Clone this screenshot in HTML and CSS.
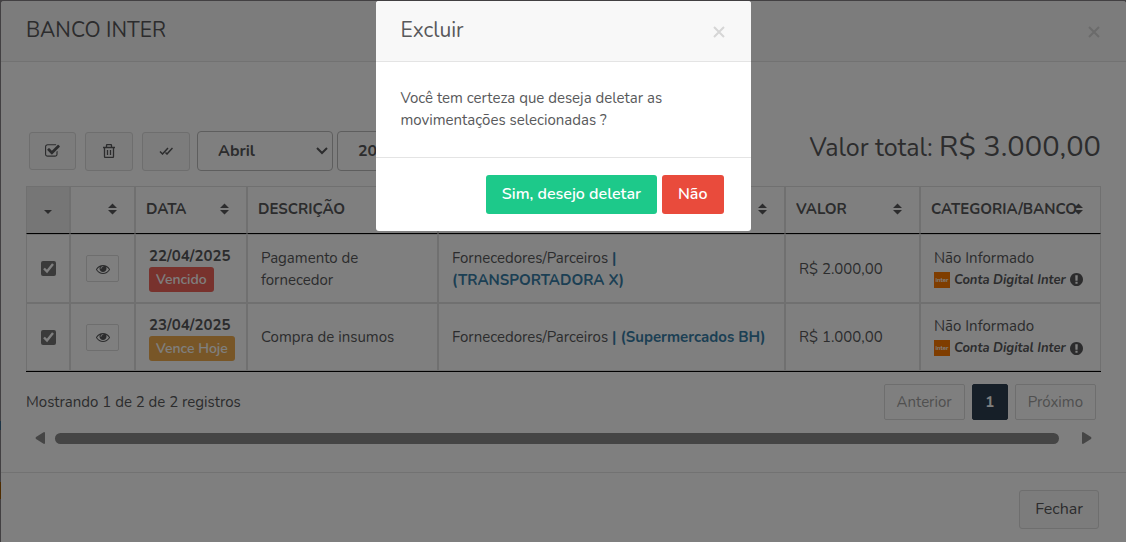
FILE: index.html
```html
<!DOCTYPE html>
<html lang="pt-BR">
<head>
    <meta charset="UTF-8">
    <meta name="viewport" content="width=device-width, initial-scale=1.0">
    <title>Banco Inter</title>
    <link rel="stylesheet" href="styles.css">
</head>
<body>
    <!-- Shared icons -->
    <svg class="sprite" aria-hidden="true">
        <symbol id="icon-check" viewBox="0 0 1792 1792"><path d="M1408 930v318q0 119-84.5 203.5t-203.5 84.5h-832q-119 0-203.5-84.5t-84.5-203.5v-832q0-119 84.5-203.5t203.5-84.5h832q63 0 117 25 15 7 18 23 3 17-9 29l-49 49q-10 10-23 10-3 0-9-2-23-6-45-6h-832q-66 0-113 47t-47 113v832q0 66 47 113t113 47h832q66 0 113-47t47-113v-254q0-13 9-22l64-64q10-10 23-10 6 0 12 3 20 8 20 29zm231-489l-814 814q-24 24-57 24t-57-24l-430-430q-24-24-24-57t24-57l110-110q24-24 57-24t57 24l263 263 647-647q24-24 57-24t57 24l110 110q24 24 24 57t-24 57z"/></symbol>
        <symbol id="icon-trash" viewBox="0 0 14 14"><path fill="none" stroke="currentColor" stroke-width="1.3" d="M1 3.5h12M4.5 3.5v-2q0-1 1-1h3q1 0 1 1v2M2.5 3.5v9q0 1 1 1h7q1 0 1-1v-9M5.5 6v5M8.5 6v5"/></symbol>
        <symbol id="icon-checks" viewBox="0 0 14 8"><path fill="none" stroke="currentColor" stroke-width="1.5" d="M1 4.5l2.500 2.500L9 1M6.500 5.500L8 7l5.500-6"/></symbol>
        <symbol id="icon-eye" viewBox="0 0 1792 1792"><path d="M1664 960q-152-236-381-353 61 104 61 225 0 185-131.500 316.500t-316.500 131.500-316.500-131.500-131.500-316.500q0-121 61-225-229 117-381 353 133 205 333.500 326.500t434.500 121.500 434.500-121.500 333.500-326.500zm-720-384q0-20-14-34t-34-14q-125 0-214.500 89.500t-89.500 214.500q0 20 14 34t34 14 34-14 14-34q0-86 61-147t147-61q20 0 34-14t14-34zm848 384q0 34-20 69-140 230-376.500 368.500t-499.500 138.500-499.500-139-376.500-368q-20-35-20-69t20-69q140-229 376.500-368t499.500-139 499.500 139 376.500 368q20 35 20 69z"/></symbol>
        <symbol id="icon-info" viewBox="128 128 1536 1536"><path d="M896 128q209 0 385.500 103t279.500 279.500 103 385.500-103 385.500-279.500 279.500-385.500 103-385.500-103-279.500-279.500-103-385.500 103-385.500 279.500-279.500 385.500-103zm128 1247v-190q0-14-9-23.500t-22-9.500h-192q-13 0-23 10t-10 23v190q0 13 10 23t23 10h192q13 0 22-9.500t9-23.500zm-2-344l18-621q0-12-10-18-10-8-24-8h-220q-14 0-24 8-10 6-10 18l17 621q0 10 10 17.500t24 7.500h185q14 0 23.500-7.500t10.500-17.500z"/></symbol>
        <symbol id="icon-sort" viewBox="0 0 9 12"><path d="M4.500 0.500L9 5H0zM0 7h9L4.500 11.500z"/></symbol>
        <symbol id="icon-close" viewBox="0 0 12 12"><path fill="none" stroke="currentColor" stroke-width="2" d="M1 1l10 10M11 1L1 11"/></symbol>
    </svg>

    <main class="panel">
        <header class="modal-header">
            <h1 class="modal-title">BANCO INTER</h1>
            <button class="close" aria-label="Fechar"><svg><use href="#icon-close"/></svg></button>
        </header>

        <div class="panel-body">
            <div class="toolbar">
                <button class="btn btn-default btn-tool btn-first" aria-label="Selecionar"><svg class="icon-md"><use href="#icon-check"/></svg></button>
                <button class="btn btn-default btn-tool" aria-label="Excluir"><svg class="icon-sm"><use href="#icon-trash"/></svg></button>
                <button class="btn btn-default btn-tool" aria-label="Confirmar"><svg class="icon-checks"><use href="#icon-checks"/></svg></button>
                <div class="filters">
                    <select class="month" aria-label="Mês"><option>Abril</option></select>
                    <select class="year" aria-label="Ano"><option>2025</option></select>
                </div>
                <p class="total">Valor total: <span class="total-value">R$ 3.000,00</span></p>
            </div>

            <table class="grid">
                <colgroup>
                    <col class="col-check"><col class="col-view"><col class="col-date"><col class="col-desc"><col><col class="col-value"><col class="col-bank">
                </colgroup>
                <thead>
                    <tr>
                        <th class="sorted" aria-label="Selecionar"><span class="caret"></span></th>
                        <th aria-label="Ver"><svg class="sort"><use href="#icon-sort"/></svg></th>
                        <th>DATA<svg class="sort"><use href="#icon-sort"/></svg></th>
                        <th>DESCRIÇÃO<svg class="sort"><use href="#icon-sort"/></svg></th>
                        <th aria-label="Fornecedor"><svg class="sort"><use href="#icon-sort"/></svg></th>
                        <th>VALOR<svg class="sort"><use href="#icon-sort"/></svg></th>
                        <th>CATEGORIA/BANCO<svg class="sort"><use href="#icon-sort"/></svg></th>
                    </tr>
                </thead>
                <tbody>
                    <tr>
                        <td class="center"><input type="checkbox" aria-label="Pagamento de fornecedor" checked></td>
                        <td class="center"><button class="btn-view" aria-label="Ver"><svg class="icon-sm"><use href="#icon-eye"/></svg></button></td>
                        <td><b class="date">22/04/2025</b><span class="label label-danger">Vencido</span></td>
                        <td>Pagamento de fornecedor</td>
                        <td>Fornecedores/Parceiros <a href="#">| <span class="name">(TRANSPORTADORA X)</span></a></td>
                        <td>R$ 2.000,00</td>
                        <td>Não Informado
                            <div class="bank"><span class="bank-logo">inter</span><i>Conta Digital Inter</i><svg class="icon-info"><use href="#icon-info"/></svg></div>
                        </td>
                    </tr>
                    <tr>
                        <td class="center"><input type="checkbox" aria-label="Compra de insumos" checked></td>
                        <td class="center"><button class="btn-view" aria-label="Ver"><svg class="icon-sm"><use href="#icon-eye"/></svg></button></td>
                        <td><b class="date">23/04/2025</b><span class="label label-warning">Vence Hoje</span></td>
                        <td>Compra de insumos</td>
                        <td>Fornecedores/Parceiros <a href="#">| <span class="name">(Supermercados BH)</span></a></td>
                        <td>R$ 1.000,00</td>
                        <td>Não Informado
                            <div class="bank"><span class="bank-logo">inter</span><i>Conta Digital Inter</i><svg class="icon-info"><use href="#icon-info"/></svg></div>
                        </td>
                    </tr>
                </tbody>
            </table>

            <div class="table-footer">
                <span>Mostrando 1 de 2 de 2 registros</span>
                <nav class="pagination">
                    <button class="page" disabled>Anterior</button>
                    <button class="page active">1</button>
                    <button class="page" disabled>Próximo</button>
                </nav>
            </div>

            <div class="scrollbar">
                <svg class="arrow" viewBox="0 0 10 12"><path d="M9 0q1 0 1 1v10q0 1-1 1L1 7q-1-1 0-2z"/></svg>
                <div class="track"><div class="thumb"></div></div>
                <svg class="arrow" viewBox="0 0 10 12"><path d="M1 0q-1 0-1 1v10q0 1 1 1l8-5q1-1 0-2z"/></svg>
            </div>
        </div>

        <footer class="panel-footer">
            <button class="btn btn-default">Fechar</button>
        </footer>
    </main>

    <div class="backdrop">
        <div class="dialog" role="dialog" aria-labelledby="dialogTitle">
            <header class="modal-header">
                <h2 class="modal-title" id="dialogTitle">Excluir</h2>
                <button class="close" aria-label="Fechar"><svg><use href="#icon-close"/></svg></button>
            </header>
            <p class="dialog-body">Você tem certeza que deseja deletar as movimentações selecionadas ?</p>
            <footer class="dialog-footer">
                <button class="btn btn-success">Sim, desejo deletar</button>
                <button class="btn btn-danger">Não</button>
            </footer>
        </div>
    </div>
</body>
</html>
```
FILE: styles.css
```css
* {
    box-sizing: border-box;
}
body {
    margin: 0;
    padding: 1px 0 0 1px;
    /* Page behind the panel, only its edge shows */
    background: linear-gradient(#848084 421px, #38688c 421px, #38688c 430px, #848084 430px, #848084 482px, #9c5800 482px, #9c5800 499px, #848084 499px);
    color: #58595b;
    font-family: Nunito, Lato, sans-serif;
    font-size: 15px;
    line-height: 22px;
    overflow: hidden;
}
button, select, input {
    font-family: inherit;
    color: inherit;
}
button {
    cursor: pointer;
}
svg {
    fill: currentColor;
}
.sprite {
    position: absolute;
    width: 0;
    height: 0;
}

/* Panel */
.panel {
    min-height: calc(100vh - 1px);
    background: #fff;
    border-radius: 3px 3px 0 0;
}
.modal-header {
    display: flex;
    justify-content: space-between;
    align-items: center;
    height: 61px;
    padding: 0 26px 2px 25px;
    background: #f8f8f8;
    border-bottom: 1px solid #e4e4e4;
    border-radius: 3px 3px 0 0;
}
.modal-title {
    margin: 0;
    font-size: 21px;
    font-weight: 400;
}
.close {
    display: flex;
    margin-top: 4px;
    padding: 0;
    border: none;
    background: none;
    color: #d6d6d6;
}
.close svg {
    width: 12px;
    height: 12px;
}
.panel-body {
    padding: 69px 25px 24px;
}

/* Toolbar */
.toolbar {
    display: flex;
    align-items: center;
    gap: 9px;
    height: 40px;
    margin-bottom: 15px;
    padding-left: 3px;
}
.btn {
    height: 39px;
    padding: 0 15px 2px;
    border: 1px solid transparent;
    border-radius: 3px;
    font-size: 16px;
    font-weight: 600;
}
.btn-default {
    background: #f8f8f8;
    border-color: #dcdcdc;
    font-weight: 400;
}
.btn-tool {
    display: flex;
    align-items: center;
    justify-content: center;
    width: 48px;
    padding: 0;
}
.btn-first {
    width: 47px;
    height: 38px;
}
.icon-md {
    width: 16px;
    height: 16px;
}
.icon-sm {
    width: 14px;
    height: 14px;
}
.icon-checks {
    width: 14px;
    height: 8px;
}
.filters {
    display: flex;
    gap: 4px;
    margin-left: -2px;
}
.filters select {
    height: 40px;
    padding: 0 20px;
    border: 1px solid #bcbcbc;
    border-radius: 4px;
    appearance: none;
    background: #fff url("data:image/svg+xml,%3Csvg xmlns='http://www.w3.org/2000/svg' width='12' height='8'%3E%3Cpath fill='none' stroke='%2358595b' stroke-width='2' d='M1 1l5 5 5-5'/%3E%3C/svg%3E") no-repeat right 4px center;
    font-size: 16px;
    font-weight: 700;
}
.month {
    width: 136px;
}
.year {
    width: 100px;
}
.total {
    margin: 0 0 8px auto;
    font-size: 25px;
    line-height: 32px;
}
.total-value {
    font-size: 29px;
}

/* Table */
.grid {
    width: 100%;
    table-layout: fixed;
    border-collapse: separate;
    border-spacing: 0;
    border-bottom: 1px solid #000;
}
.col-check {
    width: 44px;
}
.col-view {
    width: 65px;
}
.col-date {
    width: 112px;
}
.col-desc {
    width: 191px;
}
.col-value {
    width: 135px;
}
.col-bank {
    width: 181px;
}
.grid th, .grid td {
    border: 1px solid #e0e0e0;
}
.grid th {
    position: relative;
    height: 48px;
    padding: 0 10px 2px;
    border-bottom-color: #000;
    font-weight: 700;
    text-align: left;
}
.grid th.sorted {
    background: #ececec;
    text-align: center;
}
.grid td {
    height: 68px;
    padding: 0 13px;
}
.grid tbody tr:first-child td {
    height: 69px;
}
.grid td.center {
    padding: 0;
}
.sort {
    position: absolute;
    top: 16px;
    right: 17px;
    width: 9px;
    height: 12px;
}
.caret {
    display: inline-block;
    border: 4px solid transparent;
    border-top-color: currentColor;
    border-bottom: none;
}
.grid input {
    display: block;
    width: 15px;
    height: 15px;
    margin: 0 auto;
    accent-color: #757575;
}
.btn-view {
    display: flex;
    align-items: center;
    justify-content: center;
    width: 33px;
    height: 27px;
    margin: 0 auto;
    padding: 0;
    border: 1px solid #dcdcdc;
    border-radius: 2px;
    background: #fff;
}
.date {
    display: block;
}
.label {
    display: block;
    width: fit-content;
    height: 25px;
    padding: 0 7px;
    border-radius: 3px;
    color: #fff;
    font-size: 14px;
    font-weight: 600;
    line-height: 25px;
    white-space: nowrap;
}
.label-danger {
    background: #f0645a;
}
.label-warning {
    background: #f0ad4e;
}
.grid a {
    color: #387ea8;
    font-weight: 700;
    text-decoration: none;
}
.name {
    display: inline-block;
}
.bank {
    display: flex;
    align-items: center;
    gap: 4px;
    font-size: 13px;
    font-weight: 700;
    white-space: nowrap;
}
.bank-logo {
    width: 16px;
    height: 16px;
    background: #ff7a00;
    color: #fff;
    font-size: 6px;
    line-height: 16px;
    text-align: center;
}
.icon-info {
    width: 13px;
    height: 13px;
}

/* Pagination */
.table-footer {
    display: flex;
    justify-content: space-between;
    align-items: center;
    margin-top: 12px;
    padding-right: 5px;
}
.pagination {
    display: flex;
    gap: 7px;
}
.page {
    height: 36px;
    padding: 0 12px;
    border: 1px solid #dcdcdc;
    border-radius: 2px;
    background: #fff;
    color: #a0a0a0;
    font-size: 15px;
}
.page.active {
    width: 36px;
    background: #2c3e50;
    border-color: #2c3e50;
    color: #fff;
    font-weight: 700;
}

/* Horizontal scrollbar */
.scrollbar {
    display: flex;
    align-items: center;
    gap: 10px;
    height: 20px;
    margin-top: 8px;
    padding: 0 9px;
    color: #8a8a8a;
}
.arrow {
    width: 10px;
    height: 12px;
}
.track {
    flex: 1;
    padding-right: 13px;
}
.thumb {
    height: 11px;
    border-radius: 6px;
    background: #8a8a8a;
}
.panel-footer {
    display: flex;
    justify-content: flex-end;
    padding: 17px 27px;
    border-top: 1px solid #e4e4e4;
}

/* Confirm dialog */
.backdrop {
    position: fixed;
    inset: 0;
    padding-top: 1px;
    background: rgba(0, 0, 0, .5);
}
.dialog {
    max-width: 375px;
    margin: 0 auto;
    background: #fff;
    border-radius: 3px;
}
.dialog-body {
    margin: 0;
    padding: 25px 25px 26px;
}
.dialog-footer {
    display: flex;
    justify-content: flex-end;
    gap: 5px;
    padding: 17px 27px;
    border-top: 1px solid #e4e4e4;
}
.btn-success {
    background: #1dc98a;
    color: #fff;
}
.btn-danger {
    background: #e94b3c;
    color: #fff;
}
```
